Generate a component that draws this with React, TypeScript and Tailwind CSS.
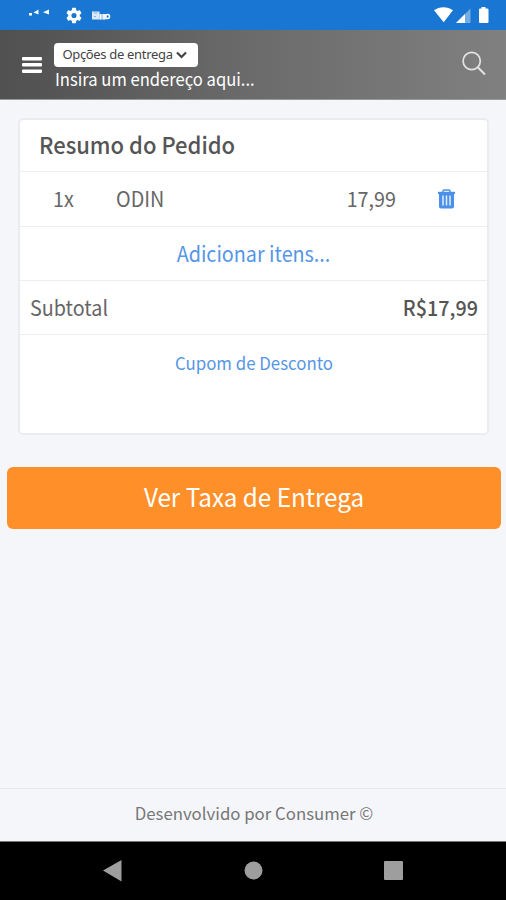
import type { ReactNode } from "react";

interface OrderItem {
  quantity: number;
  name: string;
  price: string;
}

const items: OrderItem[] = [{ quantity: 1, name: "ODIN", price: "17,99" }];

function StatusBar() {
  return (
    <div className="flex h-[30px] shrink-0 items-start bg-[#1976d2] text-white">
      <svg className="ml-7 mt-[7px]" width="22" height="10" viewBox="0 0 22 10" fill="currentColor">
        <path d="M1 6h3v2.500H1zM5.500 5.500l5-3v5zM15 5.200l6-2.700v5z" />
      </svg>
      <svg className="ml-4 mt-[7px]" width="16" height="17" viewBox="2 2 20 20" fill="currentColor">
        <path d="M19.140 12.940c.04-.3.060-.61.060-.94s-.02-.64-.07-.94l2.030-1.580a.49.490 0 0 0 .12-.61l-1.920-3.320a.49.490 0 0 0-.59-.22l-2.390.96a7 7 0 0 0-1.620-.94l-.36-2.540A.48.480 0 0 0 13.920 2.400h-3.840a.48.480 0 0 0-.47.410l-.36 2.540c-.59.240-1.130.57-1.620.94l-2.390-.96a.48.480 0 0 0-.59.220L2.740 8.870a.48.480 0 0 0 .12.610l2.030 1.580c-.05.300-.09.630-.09.940s.02.640.07.940l-2.030 1.580a.49.490 0 0 0-.12.610l1.920 3.320c.12.220.37.290.59.220l2.390-.96c.500.380 1.030.700 1.620.940l.36 2.540c.05.240.24.410.48.410h3.840c.24 0 .44-.17.470-.41l.36-2.540a7 7 0 0 0 1.620-.94l2.390.96c.22.080.47 0 .59-.22l1.920-3.320a.48.480 0 0 0-.12-.61zM12 15.200a3.200 3.200 0 1 1 0-6.400 3.200 3.200 0 0 1 0 6.400z" />
      </svg>
      <svg className="ml-[9px] mt-[11px]" width="20" height="9" viewBox="0 0 20 9" fill="none">
        <rect x="1" y="0.500" width="7.500" height="8" fill="#fff" fillOpacity="0.85" />
        <path d="M2.500 2h4M3 5.500h2" stroke="#1976d2" strokeOpacity="0.6" strokeWidth="0.8" />
        <path d="M8.500 3h7v5.500h-7z" fill="#fff" fillOpacity="0.65" />
        <path d="M9.500 3v5.500M13 3v5.500" stroke="#fff" strokeWidth="1.500" />
        <circle cx="16.500" cy="5.500" r="2" stroke="#fff" strokeWidth="1.600" />
      </svg>
      <svg className="ml-auto mr-[16px] mt-[6px]" width="57" height="18" viewBox="0 0 57 18" fill="currentColor">
        <path d="M1 4.200C6.500 0.200 14.500 0.200 20 4.200L10.700 16.200z" />
        <path d="M23 17L37.500 2.500V17z" fillOpacity="0.4" />
        <path d="M23 17L32 8V17z" />
        <path d="M48.500 1h4v1.500H54q1.500 0 1.500 1V16q0 1-1 1H47q-1 0-1-1V3.500q0-1 1-1h1.500z" />
      </svg>
    </div>
  );
}

function Header() {
  return (
    <header className="flex h-[70px] shrink-0 items-start border-b border-[#999] bg-linear-to-r from-[#505050] via-[#6b6b6b] to-[#808080] text-white">
      <button className="ml-[22px] mt-[26px]" aria-label="Menu">
        <svg width="20" height="18" viewBox="0 0 20 18" fill="currentColor">
          <rect y="1" width="20" height="3.500" rx="1" />
          <rect y="7" width="20" height="3.500" rx="1" />
          <rect y="13.500" width="20" height="3.500" rx="1" />
        </svg>
      </button>
      <div className="ml-3 mt-[13px]">
        <button className="flex h-6 w-[144px] items-center rounded-[4px] bg-white pl-2 text-[#444]">
          <span className="w-[111px] whitespace-nowrap pb-[2px] font-['Noto_Sans'] text-[13px] leading-[20px] tracking-[-0.320px]">
            Opções de entrega
          </span>
          <svg className="ml-[3px]" width="11" height="8" viewBox="0 0 11 8" fill="none" stroke="currentColor" strokeWidth="2.200">
            <path d="M1 1.500L5.500 6L10 1.500" />
          </svg>
        </button>
        <p className="scale-y-105 whitespace-nowrap pl-px text-[16.600px] leading-[24px]">Insira um endereço aqui...</p>
      </div>
      <button className="ml-auto mr-5 mt-[21px]" aria-label="Buscar">
        <svg width="24" height="25" viewBox="0 0 24 25" fill="none" stroke="#e4e4e4" strokeWidth="1.700">
          <circle cx="9.700" cy="10" r="8.600" />
          <path d="M16 16.500L23 23.500" strokeWidth="2" />
        </svg>
      </button>
    </header>
  );
}

function TrashIcon() {
  return (
    <svg width="17" height="20" viewBox="0 0 17 20" fill="none">
      <path d="M5 3.500V2q0-1 1-1h5q1 0 1 1v1.500" stroke="#4a90e8" strokeWidth="1.500" />
      <path d="M0 2.800h17v2.200H0z" fill="#4a90e8" />
      <path d="M1 5h15v12.500q0 2-2 2H3q-2 0-2-2z" fill="#4a90e8" />
      <path d="M5 6.500v10M8.500 6.500v10M12 6.500v10" stroke="#e1efff" strokeWidth="1.500" />
    </svg>
  );
}

function Row({ children, className }: { children: ReactNode; className?: string }) {
  return <div className={`flex items-center border-b border-[#eee] ${className ?? ""}`}>{children}</div>;
}

function OrderSummary() {
  return (
    <section className="ml-[18px] mr-[17px] mt-[18px] h-[317px] rounded-[5px] border-2 border-[#ebecef] bg-white text-[19.750px] text-[#666]">
      <Row className="h-[52px] pb-[6px] pl-[19px]">
        <h2 className="scale-y-106 text-[22px] font-medium leading-8 text-[#555]">Resumo do Pedido</h2>
      </Row>
      {items.map((item) => (
        <Row key={item.name} className="h-[55px]">
          <span className="w-[96px] scale-y-106 pl-[33px]">{item.quantity}x</span>
          <span className="scale-y-106">{item.name}</span>
          <span className="ml-auto scale-y-106">{item.price}</span>
          <button className="ml-[42px] mr-[32px]" aria-label="Remover">
            <TrashIcon />
          </button>
        </Row>
      ))}
      <Row className="h-[54px] justify-center text-[#5596e6]">
        <button className="scale-y-106">Adicionar itens...</button>
      </Row>
      <Row className="h-[54px] justify-between pl-[10px] pr-[9px]">
        <span className="scale-y-106">Subtotal</span>
        <span className="scale-y-106 font-medium text-[#555]">R$17,99</span>
      </Row>
      <div className="flex justify-center pl-px pt-[15px] text-[16.850px] leading-[26px] text-[#5596e6]">
        <button className="scale-y-104">Cupom de Desconto</button>
      </div>
    </section>
  );
}

export default function App() {
  return (
    <div className="flex h-[900px] w-[506px] flex-col overflow-hidden bg-[#f5f6fa] font-['Noto_Sans_CJK_SC',sans-serif]">
      <StatusBar />
      <Header />
      <main className="flex-1">
        <OrderSummary />
        <button className="mx-[7px] mt-8 block h-[62px] w-[494px] rounded-[6px] bg-[#ff9029] pb-[5px] text-[24.250px] leading-[57px] text-white">
          <span className="inline-block scale-y-106">Ver Taxa de Entrega</span>
        </button>
      </main>
      <footer className="h-[53px] shrink-0 border-t border-[#e5e7eb] pl-[2px] text-center text-[16.800px] leading-[48px] text-[#777]">
        Desenvolvido por Consumer ©
      </footer>
      <nav className="flex h-[59px] shrink-0 items-center border-t border-[#777] bg-black">
        <svg width="506" height="58" viewBox="0 0 506 58" fill="#9e9e9e">
          <path d="M103 28.500L121.500 18V39.500z" />
          <circle cx="253.500" cy="28.500" r="9" />
          <rect x="384" y="19" width="19" height="19" rx="1" />
        </svg>
      </nav>
    </div>
  );
}
